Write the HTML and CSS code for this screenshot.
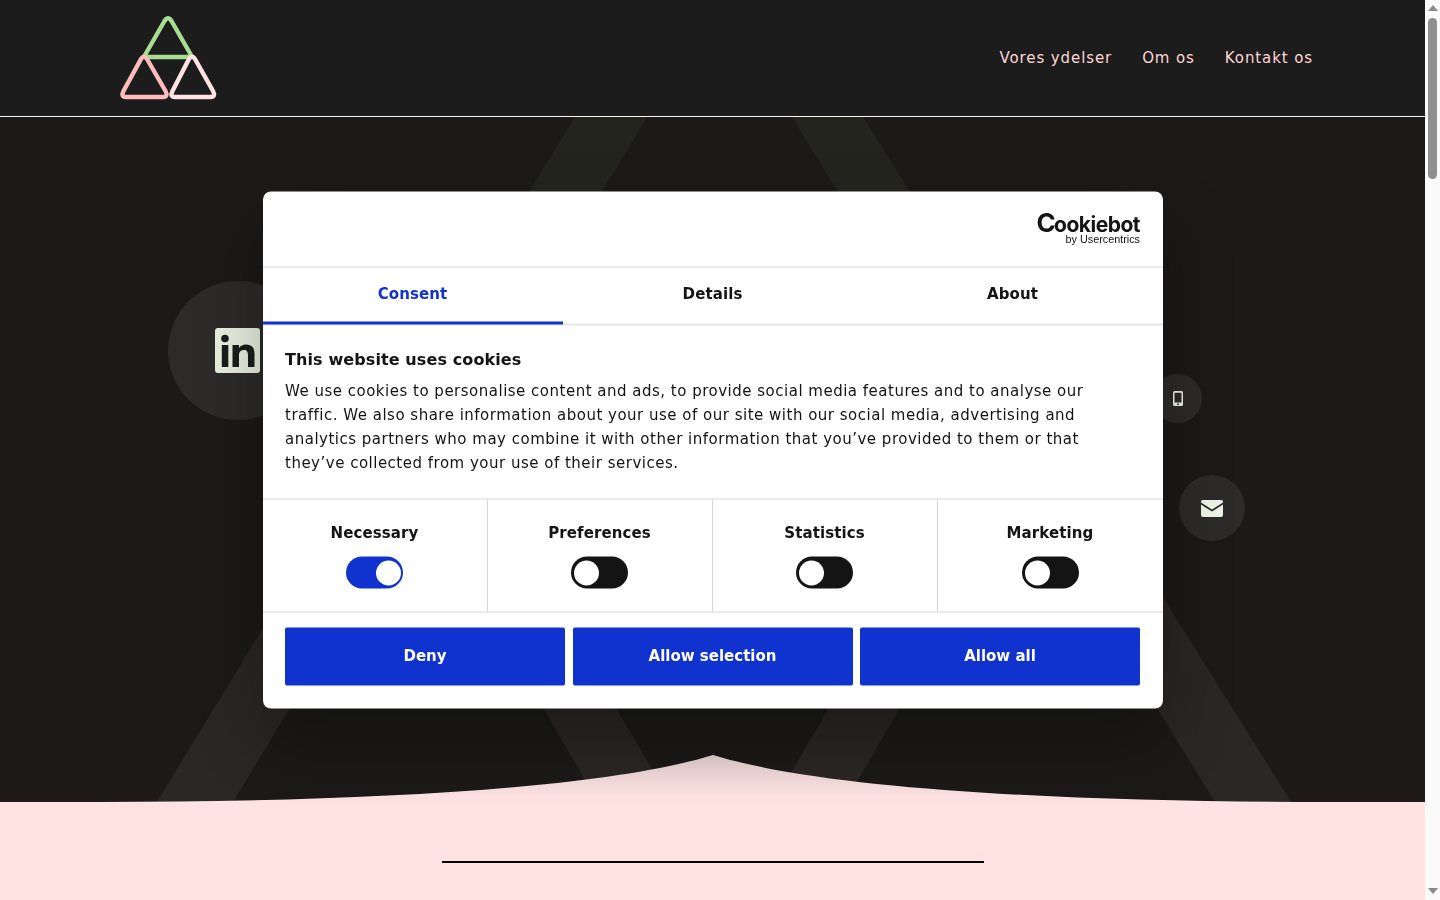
FILE: index.html
```html
<!DOCTYPE html>
<html lang="en">
<head>
<meta charset="utf-8">
<title>Cookie consent</title>
<link rel="stylesheet" href="styles.css">
</head>
<body>
<div class="shell">
  <div class="page">
    <header class="site-header">
      <a class="logo" href="#" aria-label="Logo">
        <svg width="100" height="90" viewBox="0 0 100 90" fill="none" stroke-width="4.400" stroke-linecap="round" stroke-linejoin="round">
          <path stroke="#a6dd90" d="M46.500 7 Q50 1.500 53.500 7 L73 41 Q74 43 72 43 H28 Q26 43 27 41 Z"/>
          <path stroke="#ffbcbc" d="M23 45 Q26 40.500 29 45 L47.500 77 Q50.500 83 45 83 H8 Q2.500 83 5.500 77 Z"/>
          <path stroke="#ffe3e3" d="M71 45 Q74 40.500 77 45 L95 77 Q98 83 92.500 83 H57 Q51.500 83 54.500 77 Z"/>
        </svg>
      </a>
      <nav class="main-nav">
        <a href="#">Vores ydelser</a>
        <a href="#">Om os</a>
        <a href="#">Kontakt os</a>
      </nav>
    </header>

    <section class="hero">
      <svg class="hero-art" width="1425" height="685" viewBox="0 117 1425 685" aria-hidden="true">
        <defs>
          <linearGradient id="stripe" gradientUnits="userSpaceOnUse" x1="0" y1="117" x2="0" y2="802">
            <stop offset="0" stop-color="#23241e"/>
            <stop offset="0.45" stop-color="#272522"/>
            <stop offset="1" stop-color="#2b2725"/>
          </linearGradient>
          <linearGradient id="peak" gradientUnits="userSpaceOnUse" x1="0" y1="755" x2="0" y2="796">
            <stop offset="0" stop-color="#ead6d4"/>
            <stop offset="1" stop-color="#ffe3e3"/>
          </linearGradient>
        </defs>
        <g fill="url(#stripe)">
          <polygon points="575,117 647,117 233,802 157,802"/>
          <polygon points="792,117 863,117 1291,802 1215,802"/>
          <polygon points="480,600 553,600 671,802 598,802"/>
          <polygon points="892,600 963,600 845,802 774,802"/>
        </g>
        <path fill="url(#peak)" d="M0 802 H100 C350 802 600 790 713 755 C826 790 1076 802 1326 802 H1425 V803 H0 Z"/>
      </svg>

      <a class="bubble bubble-linkedin" href="#" aria-label="LinkedIn">
        <svg width="46" height="46" viewBox="0 0 46 46">
          <rect x="0" y="0" width="45" height="45" rx="3" fill="#e9f0e0"/>
          <circle cx="10" cy="10.500" r="3.800" fill="#1c1c1a"/>
          <rect x="6.800" y="17" width="6.500" height="22" fill="#1c1c1a"/>
          <path fill="#1c1c1a" d="M17.500 17 H24 V20 C25.500 17.800 27.800 16.500 31 16.500 C37 16.500 39.500 20 39.500 26 V39 H33 V27.500 C33 24 32 22 29 22 C25.500 22 24 24.200 24 27.500 V39 H17.500 Z"/>
        </svg>
      </a>
      <a class="bubble bubble-phone" href="#" aria-label="Telefon">
        <svg width="10" height="15" viewBox="0 0 10 15">
          <rect x="0" y="0" width="10" height="15" rx="1.500" fill="#eef4e6"/>
          <rect x="1.500" y="1.800" width="7" height="9.700" fill="#2c2b2a"/>
          <circle cx="5" cy="13.200" r="0.900" fill="#2c2b2a"/>
        </svg>
      </a>
      <a class="bubble bubble-mail" href="#" aria-label="E-mail">
        <svg width="22" height="17" viewBox="0 0 22 17">
          <path fill="#eef4e6" d="M1.500 0 H20.500 Q22 0 22 1.800 V2.500 L11 9.500 L0 2.500 V1.800 Q0 0 1.500 0 Z"/>
          <path fill="#eef4e6" d="M0 4.600 L11 11.600 L22 4.600 V15 Q22 17 20 17 H2 Q0 17 0 15 Z"/>
        </svg>
      </a>
    </section>

    <section class="below">
      <div class="rule"></div>
    </section>
  </div>

  <div class="scrollbar" aria-hidden="true">
    <span class="arrow arrow-up"></span>
    <span class="track"><span class="thumb"></span></span>
    <span class="arrow arrow-down"></span>
  </div>
</div>

<div class="dialog" role="dialog" aria-label="Cookie consent">
  <div class="dialog-top">
    <div class="brand">
      <span class="brand-name"><span class="brand-initial">C</span>ookiebot</span>
      <span class="brand-sub">by Usercentrics</span>
    </div>
  </div>
  <div class="tabs">
    <a class="tab tab-active" href="#">Consent</a>
    <a class="tab" href="#">Details</a>
    <a class="tab" href="#">About</a>
  </div>
  <div class="dialog-body">
    <h2 class="dialog-title">This website uses cookies</h2>
    <p class="dialog-text">We use cookies to personalise content and ads, to provide social media features and to analyse our traffic. We also share information about your use of our site with our social media, advertising and analytics partners who may combine it with other information that you’ve provided to them or that they’ve collected from your use of their services.</p>
  </div>
  <div class="choices">
    <div class="choice"><span class="choice-label">Necessary</span><span class="toggle toggle-on"><span class="knob"></span></span></div>
    <div class="choice"><span class="choice-label">Preferences</span><span class="toggle"><span class="knob"></span></span></div>
    <div class="choice"><span class="choice-label">Statistics</span><span class="toggle"><span class="knob"></span></span></div>
    <div class="choice"><span class="choice-label">Marketing</span><span class="toggle"><span class="knob"></span></span></div>
  </div>
  <div class="actions">
    <button class="btn">Deny</button>
    <button class="btn">Allow selection</button>
    <button class="btn">Allow all</button>
  </div>
</div>
</body>
</html>
```

FILE: styles.css
```css
* { box-sizing: border-box; }

html, body {
  margin: 0;
  height: 100%;
  overflow: hidden;
  background: #1b1a19;
  font-family: "DejaVu Sans", sans-serif;
}

a { text-decoration: none; color: inherit; }

.shell {
  display: flex;
  width: 1440px;
  height: 900px;
  overflow: hidden;
}

.page {
  width: 1425px;
  flex: none;
  display: flex;
  flex-direction: column;
}

.site-header {
  height: 117px;
  flex: none;
  background: #1c1c1c;
  border-bottom: 1px solid #f4f4f4;
  display: flex;
  align-items: flex-start;
  justify-content: space-between;
  padding: 14px 112px 0 118px;
}

.logo { display: block; line-height: 0; }

.main-nav {
  display: flex;
  gap: 30px;
  padding-top: 34px;
  color: #ffd6d6;
  font-size: 15px;
  line-height: 20px;
  letter-spacing: 0.9px;
}

.hero {
  position: relative;
  height: 685px;
  flex: none;
  background: #1b1a19;
}

.hero-art {
  position: absolute;
  left: 0;
  top: 0;
  display: block;
}

.bubble {
  position: absolute;
  display: flex;
  align-items: center;
  justify-content: center;
  border-radius: 50%;
  background: #2c2b2a;
}

.bubble-linkedin { left: 168px; top: 164px; width: 140px; height: 139px; }
.bubble-phone { left: 1153px; top: 257px; width: 49px; height: 49px; }
.bubble-mail { left: 1179px; top: 358px; width: 66px; height: 66px; }

.below {
  flex: 1;
  background: #ffe3e3;
  padding-top: 59px;
}

.rule {
  width: 542px;
  height: 2px;
  margin: 0 auto;
  background: #000;
}

.scrollbar {
  width: 15px;
  flex: none;
  background: #fafafa;
  display: flex;
  flex-direction: column;
  align-items: center;
}

.arrow {
  width: 0;
  height: 0;
  flex: none;
  border-left: 5px solid transparent;
  border-right: 5px solid transparent;
}

.arrow-up { margin-top: 5px; border-bottom: 6px solid #8a8a8a; }
.arrow-down { margin-bottom: 6px; border-top: 6px solid #8a8a8a; }

.track {
  flex: 1;
  width: 9px;
  padding-top: 7px;
}

.thumb {
  display: block;
  width: 9px;
  height: 161px;
  border-radius: 5px;
  background: #8f8f8f;
}

.dialog {
  position: fixed;
  left: 712.500px;
  top: 450px;
  transform: translate(-50%, -50%);
  width: 900px;
  height: 517px;
  display: flex;
  flex-direction: column;
  background: #fff;
  border-radius: 8px;
  color: #141414;
  box-shadow: 0 32px 68px rgba(0, 0, 0, 0.3);
  font-size: 15px;
  letter-spacing: 0.5px;
}

.dialog-top {
  height: 76px;
  flex: none;
  display: flex;
  justify-content: flex-end;
  align-items: flex-start;
  padding: 23.500px 22.500px 0 0;
  border-bottom: 1px solid #d6d6d6;
}

.brand {
  display: flex;
  flex-direction: column;
  align-items: flex-end;
}

.brand-name {
  font-family: "Inter", sans-serif;
  font-size: 21px;
  line-height: 18px;
  font-weight: 700;
  letter-spacing: -0.5px;
  color: #141414;
}

.brand-initial {
  font-size: 26px;
  line-height: 1px;
  letter-spacing: -1.800px;
}

.brand-sub {
  font-family: "Liberation Sans", sans-serif;
  font-size: 10.800px;
  line-height: 10px;
  letter-spacing: 0;
  color: #141414;
}

.tabs {
  display: grid;
  grid-template-columns: repeat(3, 1fr);
  height: 58px;
  flex: none;
  border-bottom: 2px solid #e6e6e6;
}

.tab {
  display: flex;
  align-items: center;
  justify-content: center;
  height: 57px;
  padding-bottom: 5px;
  font-weight: 700;
  letter-spacing: 0.1px;
  color: #141414;
}

.tab-active {
  color: #1032cf;
  border-bottom: 3px solid #1032cf;
  padding-bottom: 2px;
}

.dialog-body {
  height: 174px;
  flex: none;
  padding: 22px 22.500px 0;
  border-bottom: 1px solid #d6d6d6;
}

.dialog-title {
  margin: 0 0 7px;
  font-size: 16px;
  line-height: 24px;
  font-weight: 700;
  letter-spacing: 0.1px;
}

.dialog-text {
  margin: 0;
  line-height: 24px;
}

.choices {
  display: grid;
  grid-template-columns: repeat(4, 1fr);
  height: 112.500px;
  flex: none;
  border-bottom: 1px solid #d6d6d6;
}

.choice {
  display: flex;
  flex-direction: column;
  align-items: center;
  gap: 12px;
  padding-top: 21px;
  border-right: 1px solid #d6d6d6;
}

.choice:last-child { border-right: 0; }

.choice-label {
  font-weight: 700;
  line-height: 24px;
  font-size: 15px;
  letter-spacing: 0.1px;
}

.toggle {
  display: flex;
  width: 57px;
  height: 32px;
  padding: 3.500px 3px;
  border-radius: 16px;
  background: #141414;
}

.toggle-on {
  background: #1032cf;
  justify-content: flex-end;
  padding-right: 2px;
}

.knob {
  width: 25px;
  height: 25px;
  border-radius: 50%;
  background: #fff;
}

.actions {
  display: grid;
  grid-template-columns: repeat(3, 1fr);
  gap: 7.500px;
  padding: 15.500px 22.500px 0 22.500px;
}

.btn {
  height: 58px;
  padding: 0 0 1px;
  border: 0;
  border-radius: 2px;
  background: #1032cf;
  color: #fff;
  font: 700 15px/1 "DejaVu Sans", sans-serif;
  letter-spacing: 0;
}
```
